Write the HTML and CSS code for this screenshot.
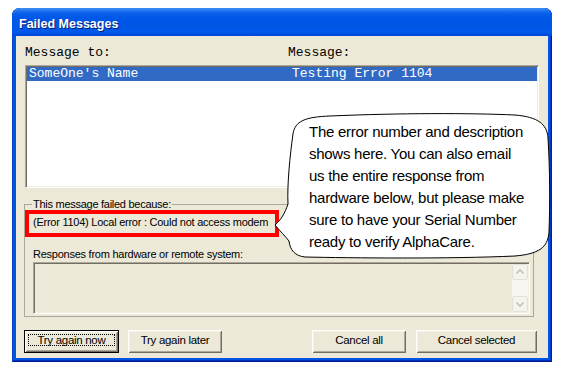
FILE: index.html
```html
<!DOCTYPE html>
<html>
<head>
<meta charset="utf-8">
<link rel="stylesheet" href="styles.css">
</head>
<body>
<div class="window">
  <div class="titlebar">Failed Messages</div>
  <div class="client">
    <div class="cols"><span class="c1">Message to:</span><span>Message:</span></div>
    <div class="listbox">
      <div class="row sel"><span class="c1">SomeOne's Name</span><span>Testing Error 1104</span></div>
    </div>
    <fieldset class="group">
      <legend>This message failed because:</legend>
      <div class="err">(Error 1104) Local error : Could not access modem</div>
      <div class="lbl">Responses from hardware or remote system:</div>
      <div class="textarea">
        <div class="sb">
          <div class="sbbtn"><svg width="14" height="14" viewBox="0 0 14 14"><polyline points="3.5,8.5 7,5 10.5,8.5" fill="none" stroke="#C4C2B6" stroke-width="1.6"/></svg></div>
          <div class="sbtrack"></div>
          <div class="sbbtn"><svg width="14" height="14" viewBox="0 0 14 14"><polyline points="3.5,5.5 7,9 10.5,5.5" fill="none" stroke="#C4C2B6" stroke-width="1.6"/></svg></div>
        </div>
      </div>
    </fieldset>
    <div class="buttons">
      <div class="btn default w95"><span class="focus">Try again now</span></div>
      <div class="btn w94 gap9"><span>Try again later</span></div>
      <div class="btn w94 gap90"><span>Cancel all</span></div>
      <div class="btn w121 gap10"><span>Cancel selected</span></div>
    </div>
  </div>
</div>
<svg class="bubble" width="570" height="379" viewBox="0 0 570 379">
  <path d="M 293 134 C 295 121, 305 117, 330 116 C 400 113, 470 113, 515 115 C 538 117, 547 124, 548 138 C 550 170, 550 205, 549 232 C 548 248, 538 254, 515 256 C 450 259, 350 258, 305 257 C 295 256, 290 250, 289 241 C 285 236, 280 231, 275 225 C 281 220, 285 213, 288 204 C 287 185, 290 155, 293 134 Z" fill="#fff" stroke="#000" stroke-width="1"/>
</svg>
<div class="bubbletext">The error number and description<br>shows here. You can also email<br>us the entire response from<br>hardware below, but please make<br>sure to have your Serial Number<br>ready to verify AlphaCare.</div>
</body>
</html>
```
FILE: styles.css
```css
html, body {
  margin: 0;
  padding: 0;
}
body {
  background: #fff;
  width: 570px;
  height: 379px;
  overflow: hidden;
  position: relative;
}
.window {
  margin: 8px 0 0 12px;
  width: 540px;
  height: 354px;
  box-sizing: border-box;
  background: #0055E5;
  border-radius: 8px 8px 0 0;
  display: flex;
  flex-direction: column;
  box-shadow: inset 1px 0 #0843C2, inset -1px 0 #001E9A, inset 0 -1px #001A8C, inset -2px 0 #0038C8, inset 0 -2px #0030C0;
}
.titlebar {
  height: 28px;
  box-sizing: border-box;
  padding: 9px 0 0 7px;
  border-radius: 8px 8px 0 0;
  background: linear-gradient(to bottom, #3E8DF5 0, #2A7CF0 2px, #0C61EA 5px, #0058E8 9px, #0055E4 60%, #0059EC 85%, #0047D4 100%);
  font: bold 12.5px/14px "Liberation Sans", Arial, sans-serif;
  color: #fff;
  text-shadow: 1px 1px #0A1E6E;
}
.client {
  flex: 1;
  margin: 0 4px 4px;
  background: #ECE9D8;
  padding-top: 9px;
  display: flex;
  flex-direction: column;
}
.cols {
  display: flex;
  height: 15px;
  line-height: 15px;
  font-family: "Liberation Mono", "Courier New", monospace;
  font-size: 13px;
  margin-left: 9px;
  color: #000;
}
.cols .c1 {
  width: 263px;
}
.listbox {
  margin: 5px 0 0 9px;
  width: 514px;
  height: 123px;
  box-sizing: border-box;
  background: #fff;
  border: 1px solid;
  border-color: #ACA899 #fff #fff #ACA899;
  padding: 1px;
  box-shadow: inset 1px 1px #716F64, inset -1px -1px #F1EFE2;
}
.row {
  display: flex;
  height: 14px;
  line-height: 14px;
  font-family: "Liberation Mono", "Courier New", monospace;
  font-size: 13px;
  padding-left: 2px;
  white-space: pre;
}
.row.sel {
  background: #316AC5;
  color: #fff;
}
.row .c1 {
  width: 263px;
}
.group {
  margin: 10px 0 0 8px;
  width: 510px;
  box-sizing: border-box;
  padding: 0 0 2px 0;
  border: 1px solid #ACA899;
  min-width: 0;
}
.group legend {
  margin-left: 7px;
  padding: 0 1px;
  font-family: "Liberation Sans", Arial, sans-serif;
  font-size: 11px;
  letter-spacing: -0.27px;
  line-height: 13px;
  color: #000;
}
.err {
  margin-top: -1px;
  width: 254px;
  height: 27px;
  box-sizing: border-box;
  border: 4px solid #FF0000;
  padding-left: 4px;
  line-height: 17px;
  font-family: "Liberation Sans", Arial, sans-serif;
  font-size: 11px;
  letter-spacing: -0.25px;
  white-space: nowrap;
  color: #000;
}
.lbl {
  margin: 10px 0 0 8px;
  line-height: 14px;
  font-family: "Liberation Sans", Arial, sans-serif;
  font-size: 11px;
  letter-spacing: -0.25px;
  color: #000;
}
.textarea {
  margin: 1px 0 0 8px;
  width: 497px;
  height: 52px;
  box-sizing: border-box;
  border: 1px solid;
  border-color: #ACA899 #fff #fff #ACA899;
  padding: 1px;
  box-shadow: inset 1px 1px #716F64, inset -1px -1px #F1EFE2;
  background: #ECE9D8;
  display: flex;
  justify-content: flex-end;
}
.sb {
  width: 16px;
  display: flex;
  flex-direction: column;
  background: #F7F6F1;
}
.sbbtn {
  height: 16px;
  box-sizing: border-box;
  border: 1px solid #E3E1D8;
  border-radius: 2px;
  background: #F4F3EE;
  display: flex;
  align-items: center;
  justify-content: center;
}
.sbtrack {
  flex: 1;
}
.buttons {
  margin: 13px 0 0 8px;
  display: flex;
}
.btn {
  height: 23px;
  box-sizing: border-box;
  padding-bottom: 3px;
  display: flex;
  align-items: center;
  justify-content: center;
  background: #ECE9D8;
  box-shadow: inset 1px 1px #fff, inset -1px -1px #716F64, inset 2px 2px #F1EFE2, inset -2px -2px #ACA899;
  font-family: "Liberation Sans", Arial, sans-serif;
  font-size: 11.5px;
  letter-spacing: -0.3px;
  line-height: 14px;
  color: #000;
  white-space: nowrap;
}
.btn.default {
  border: 1px solid #000;
}
.focus {
  display: block;
  height: 12px;
  box-sizing: border-box;
  border: 1px dotted #000;
  padding: 0 4px;
  line-height: 10px;
  width: 87px;
  text-align: center;
}
.w95 { width: 95px; }
.w94 { width: 94px; }
.w121 { width: 121px; }
.gap9 { margin-left: 9px; }
.gap90 { margin-left: 90px; }
.gap10 { margin-left: 10px; }
.bubble {
  position: absolute;
  left: 0;
  top: 0;
  pointer-events: none;
}
.bubbletext {
  position: absolute;
  left: 309px;
  top: 121px;
  font-family: "Liberation Sans", Arial, sans-serif;
  font-size: 15px;
  letter-spacing: -0.27px;
  line-height: 22px;
  color: #000;
  white-space: nowrap;
}
```
